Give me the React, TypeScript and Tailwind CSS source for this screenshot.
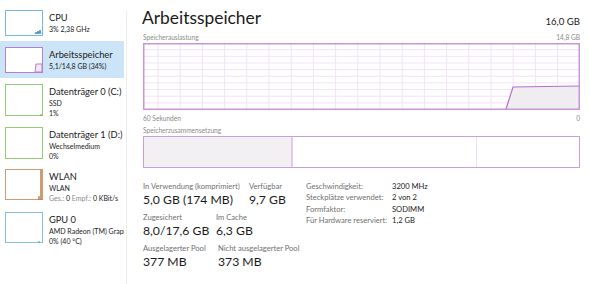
import type { ReactNode } from 'react'

interface SideItem {
  title: string
  lines: ReactNode[]
  color: string
  height: number
  thumbH: number
  selected?: boolean
  mini?: ReactNode
}

const items: SideItem[] = [
  {
    title: 'CPU',
    lines: ['3%  2,38 GHz'],
    color: '#75b7e3',
    height: 37,
    thumbH: 26,
    mini: <path d="M30 24 L31 22 L32 24 L33 21 L34 24 L35 20 L36 24" stroke="#3f8fd0" strokeWidth="1" fill="none" />
  },
  {
    title: 'Arbeitsspeicher',
    lines: ['5,1/14,8 GB (34%)'],
    color: '#b77fca',
    height: 37,
    thumbH: 26,
    selected: true,
    mini: <path d="M30 25 L31 17 L37 17 L37 25 Z" stroke="#b77fca" strokeWidth="1" fill="#eeeaf0" />
  },
  {
    title: 'Datenträger 0 (C:)',
    lines: ['SSD', '1%'],
    color: '#95cc75',
    height: 43,
    thumbH: 32,
    mini: <path d="M35 31 L37 31" stroke="#5da83a" strokeWidth="1" />
  },
  {
    title: 'Datenträger 1 (D:)',
    lines: ['Wechselmedium', '0%'],
    color: '#95cc75',
    height: 42,
    thumbH: 32
  },
  {
    title: 'WLAN',
    lines: [
      'WLAN',
      <span key="w">
        <span className="text-[#8a8a8a]">Ges.:</span> 0 <span className="text-[#8a8a8a]">Empf.:</span> 0 KBit/s
      </span>
    ],
    color: '#d09a72',
    height: 43,
    thumbH: 31,
    mini: (
      <>
        <path d="M36 1 L36 31" stroke="#c27b45" strokeWidth="1.5" />
        <path d="M33 31 L34 27 L35 31" stroke="#c27b45" strokeWidth="0.8" fill="none" />
      </>
    )
  },
  {
    title: 'GPU 0',
    lines: ['AMD Radeon (TM) Graphics', '0%  (40 °C)'],
    color: '#85bfe4',
    height: 43,
    thumbH: 31,
    mini: <path d="M33 30 L35 30" stroke="#3f8fd0" strokeWidth="1" />
  }
]

function Sidebar() {
  return (
    <div className="w-[124px] shrink-0 pt-[4px]">
      {items.map((it) => (
        <div
          key={it.title}
          className={`flex pl-[5px] pt-[6px] overflow-hidden ${it.selected ? 'bg-[#cce4f7]' : ''}`}
          style={{ height: it.height }}
        >
          <svg width="38" height={it.thumbH} className="shrink-0 bg-white">
            <rect x="0.5" y="0.5" width="37" height={it.thumbH - 1} fill="white" stroke={it.color} strokeWidth="1" />
            {it.mini}
          </svg>
          <div className="ml-[6px] whitespace-nowrap text-[#1a1a1a]">
            <div className="text-[9.3px] leading-[13px] mt-[1px]">{it.title}</div>
            {it.lines.map((l, i) => (
              <div key={i} className="text-[7px] leading-[10px]">
                {l}
              </div>
            ))}
          </div>
        </div>
      ))}
    </div>
  )
}

function UsageGraph() {
  const w = 437
  const h = 67
  const vlines: number[] = []
  for (let x = 15; x < w; x += 22.2) vlines.push(x)
  const hlines: number[] = []
  for (let k = 1; k < 10; k++) hlines.push(k * 6.65)
  return (
    <svg width={w} height={h} className="block">
      {vlines.map((x) => (
        <line key={x} x1={x} y1={0} x2={x} y2={h} stroke="#f1e3f4" strokeWidth="1" />
      ))}
      {hlines.map((y) => (
        <line key={y} x1={0} y1={y} x2={w} y2={y} stroke="#f1e3f4" strokeWidth="1" />
      ))}
      <path d={`M363 66 L370 44 L${w} 43 L${w} 66 Z`} fill="#f0edf1" />
      <path d={`M363 66 L370 44 L${w} 43`} fill="none" stroke="#b56fcb" strokeWidth="1.2" />
      <rect x="0.75" y="0.75" width={w - 1.5} height={h - 1.5} fill="none" stroke="#c994d9" strokeWidth="1.5" />
    </svg>
  )
}

function Stat({ label, value, width }: { label: string; value: string; width?: string }) {
  return (
    <div className={width}>
      <div className="text-[7.6px] leading-[10px] text-[#707070] whitespace-nowrap">{label}</div>
      <div className="text-[12.2px] leading-[18px] text-[#1a1a1a] whitespace-nowrap">{value}</div>
    </div>
  )
}

const details = [
  ['Geschwindigkeit:', '3200 MHz'],
  ['Steckplätze verwendet:', '2 von 2'],
  ['Formfaktor:', 'SODIMM'],
  ['Für Hardware reserviert:', '1,2 GB']
]

export default function App() {
  return (
    <div className="w-[590px] h-[284px] flex bg-white overflow-hidden font-['Lato','Segoe_UI',sans-serif]">
      <Sidebar />
      <div className="w-px bg-[#ececec] mt-[10px] ml-[2px] shrink-0" />
      <div className="flex-1 pl-[15px] pr-[10px] pt-[5px]">
        <div className="flex items-end justify-between">
          <div className="text-[17.4px] leading-[26px] text-[#1a1a1a]">Arbeitsspeicher</div>
          <div className="text-[9.6px] leading-[14px] text-[#1a1a1a] mb-[2px]">16,0 GB</div>
        </div>
        <div className="flex justify-between text-[6.6px] leading-[10px] text-[#8a8a8a] mt-[1px] pl-[1px]">
          <span>Speicherauslastung</span>
          <span>14,8 GB</span>
        </div>
        <div className="ml-[1px] mt-[1px]">
          <UsageGraph />
        </div>
        <div className="flex justify-between text-[6.6px] leading-[10px] text-[#8a8a8a] mt-[3px] pl-[1px]">
          <span>60 Sekunden</span>
          <span>0</span>
        </div>
        <div className="text-[6.6px] leading-[10px] text-[#8a8a8a] mt-[2px] pl-[1px]">Speicherzusammensetzung</div>
        <div className="ml-[1px] mt-[1px] h-[32px] flex border-[1.5px] border-[#cf9ddd]">
          <div className="w-[149px] bg-[#f2f0f3] border-r-2 border-[#e3c9ea]" />
          <div className="w-[184px] border-r border-[#eedef2]" />
          <div className="flex-1" />
        </div>
        <div className="flex mt-[13px] pl-[1px]">
          <div className="w-[163px] flex flex-col gap-[3px]">
            <div className="flex">
              <Stat width="w-[106px]" label="In Verwendung (komprimiert)" value="5,0 GB (174 MB)" />
              <Stat label="Verfügbar" value="9,7 GB" />
            </div>
            <div className="flex">
              <Stat width="w-[73px]" label="Zugesichert" value="8,0/17,6 GB" />
              <Stat label="Im Cache" value="6,3 GB" />
            </div>
            <div className="flex">
              <Stat width="w-[75px]" label="Ausgelagerter Pool" value="377 MB" />
              <Stat label="Nicht ausgelagerter Pool" value="373 MB" />
            </div>
          </div>
          <div className="text-[7.6px] leading-[11.4px]">
            {details.map(([k, v]) => (
              <div key={k} className="flex whitespace-nowrap">
                <span className="w-[86px] text-[#707070]">{k}</span>
                <span className="text-[#1a1a1a]">{v}</span>
              </div>
            ))}
          </div>
        </div>
      </div>
    </div>
  )
}
